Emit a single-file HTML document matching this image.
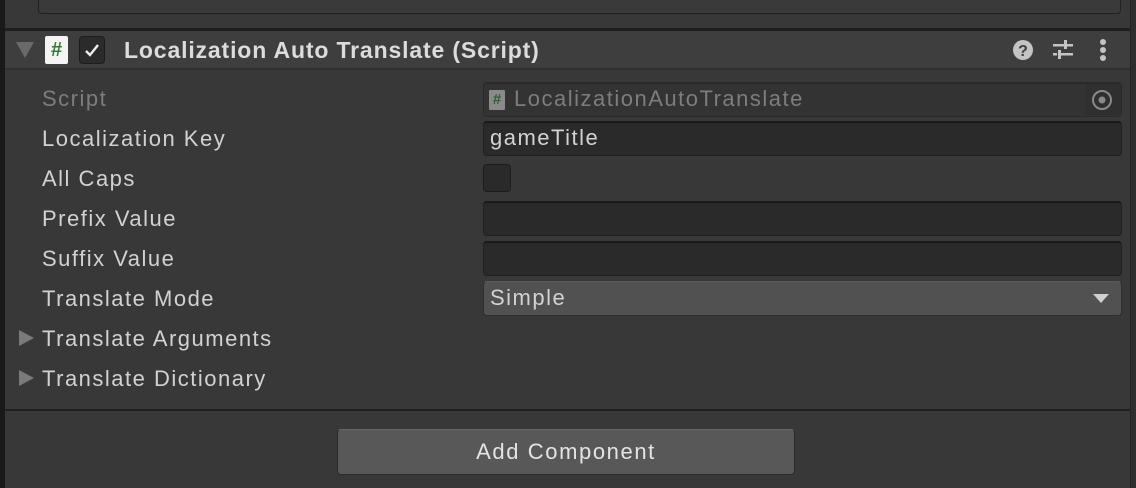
<!DOCTYPE html>
<html><head><style>
*{margin:0;padding:0;box-sizing:border-box}
body{width:1136px;height:488px;background:#383838;position:relative;overflow:hidden;font-family:"Liberation Sans",sans-serif;color:#d2d2d2}
.a{position:absolute}
.lbl{position:absolute;left:42px;font-size:22px;line-height:30px;letter-spacing:1.5px}
.fld{position:absolute;left:483px;width:639px;height:35px;background:#2a2a2a;border:1px solid #212121;border-top:2px solid #1a1a1a;border-radius:4px;font-size:22px;line-height:30px;padding-left:6px;letter-spacing:1.5px}
</style></head><body>
<div class="a" style="left:0;top:0;width:5px;height:488px;background:#191919"></div>
<div class="a" style="left:1130px;top:0;width:6px;height:488px;background:#2e2e2e;border-left:1px solid #232323"></div>
<div class="a" style="left:38px;top:-10px;width:1083px;height:24px;background:#3a3a3a;border:1px solid #222;border-radius:4px"></div>
<div class="a" style="left:5px;top:28px;width:1125px;height:3px;background:#1f1f1f"></div>
<div class="a" style="left:5px;top:31px;width:1125px;height:39px;background:#3e3e3e;border-bottom:2px solid #303030"></div>
<svg class="a" style="left:16px;top:42px" width="20" height="16"><polygon points="0,0 18,0 9,16" fill="#6a6a6a"/></svg>
<div class="a" style="left:45px;top:36px;width:23px;height:28px;background:#f4f4f4;border-radius:2px;color:#2e7d32;font-weight:bold;font-size:20px;text-align:center;line-height:28px">#</div>
<div class="a" style="left:79px;top:36px;width:26px;height:28px;background:#2b2b2b;border:1px solid #1c1c1c;border-radius:4px"></div>
<svg class="a" style="left:84px;top:42px" width="16" height="16"><path d="M2 9 L6 13 L14 3" stroke="#eee" stroke-width="2.4" fill="none"/></svg>
<div class="a" style="left:124px;top:35px;font-size:23px;font-weight:bold;line-height:30px;color:#dcdcdc;letter-spacing:0.85px">Localization Auto Translate (Script)</div>
<svg class="a" style="left:1012px;top:38px" width="100" height="24">
<circle cx="11" cy="12" r="10" fill="#c4c4c4"/><text x="11" y="18" font-size="16" font-weight="bold" text-anchor="middle" fill="#3e3e3e" font-family="Liberation Sans">?</text>
<g fill="#c4c4c4"><rect x="41" y="6" width="20" height="2.5"/><rect x="52" y="2" width="3" height="9"/><rect x="41" y="15" width="4" height="2.5"/><rect x="48" y="15" width="13" height="2.5"/><rect x="46" y="12" width="3" height="9"/>
<circle cx="91" cy="4" r="3"/><circle cx="91" cy="12" r="3"/><circle cx="91" cy="20" r="3"/></g></svg>
<div class="lbl" style="top:84px;color:#7d7d7d">Script</div>
<div class="lbl" style="top:124px">Localization Key</div>
<div class="lbl" style="top:164px">All Caps</div>
<div class="lbl" style="top:204px">Prefix Value</div>
<div class="lbl" style="top:244px">Suffix Value</div>
<div class="lbl" style="top:284px">Translate Mode</div>
<div class="lbl" style="top:324px">Translate Arguments</div>
<div class="lbl" style="top:364px">Translate Dictionary</div>
<svg class="a" style="left:19px;top:330px" width="16" height="60"><polygon points="0,0 15,8 0,16" fill="#7a7a7a"/><polygon points="0,40 15,48 0,56" fill="#7a7a7a"/></svg>
<div class="fld" style="top:82px;background:#333;border-color:#2a2a2a;color:#7d7d7d;padding-left:30px">LocalizationAutoTranslate
<div class="a" style="left:5px;top:6px;width:16px;height:20px;background:#8a8a8a;color:#2f5f2f;font-size:15px;line-height:20px;text-align:center;font-weight:bold;border-radius:1px;letter-spacing:0">#</div>
<div class="a" style="right:0;top:0;width:36px;height:31px;background:#2f2f2f"></div>
<svg class="a" style="right:8px;top:5px" width="22" height="22"><circle cx="11" cy="11" r="9" stroke="#8a8a8a" stroke-width="2" fill="none"/><circle cx="11" cy="11" r="3.5" fill="#8a8a8a"/></svg></div>
<div class="fld" style="top:121px">gameTitle</div>
<div class="a" style="left:483px;top:164px;width:28px;height:28px;background:#2a2a2a;border:1px solid #1c1c1c;border-radius:4px"></div>
<div class="fld" style="top:201px"></div>
<div class="fld" style="top:241px"></div>
<div class="fld" style="top:281px;background:#515151;border:1px solid #2f2f2f;border-top-color:#5a5a5a;line-height:32px">Simple
<svg class="a" style="right:12px;top:12px" width="16" height="10"><polygon points="0,0 16,0 8,9" fill="#cfcfcf"/></svg></div>
<div class="a" style="left:5px;top:409px;width:1125px;height:2px;background:#1f1f1f"></div>
<div class="a" style="left:337px;top:429px;width:458px;height:46px;background:#585858;border:1px solid #2b2b2b;border-top-color:#656565;border-radius:4px;font-size:22px;line-height:44px;text-align:center;color:#e4e4e4;letter-spacing:1.6px">Add Component</div>
</body></html>
